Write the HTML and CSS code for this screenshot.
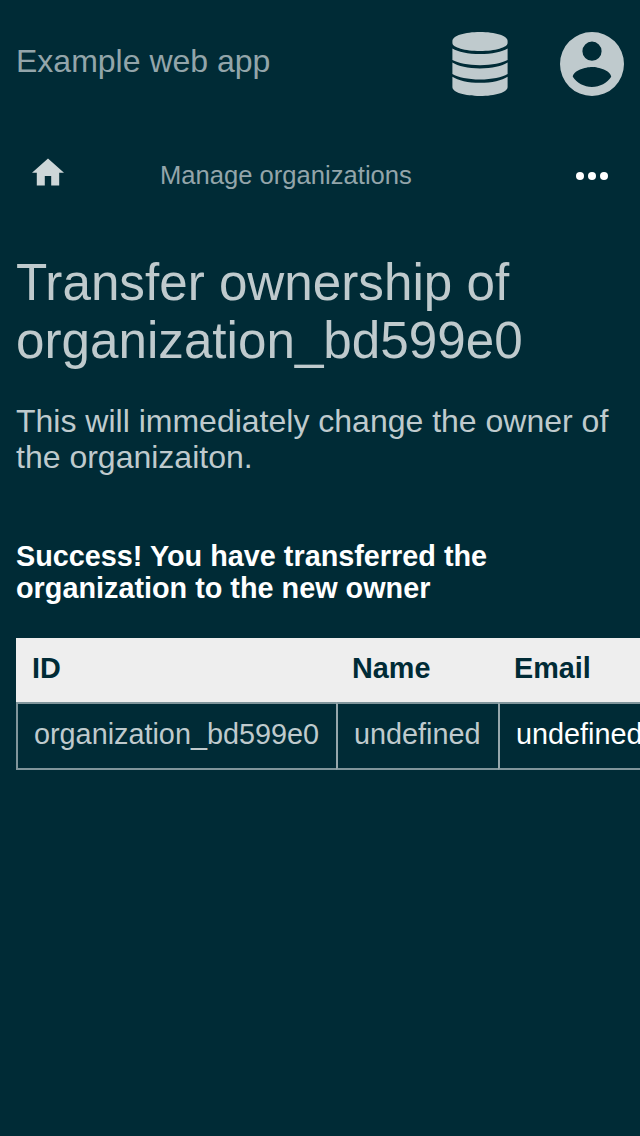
FILE: index.html
```
<!DOCTYPE html>
<html lang="en">
<head>
<meta charset="utf-8">
<title>Example web app</title>
<link rel="stylesheet" href="styles.css">
</head>
<body>
<header class="header">
  <span class="brand">Example web app</span>
  <div class="header-icons">
    <svg class="icon-data" viewBox="0 0 56 64" aria-label="Database">
      <path d="M.4 9C.4 3.500 13 0 28 0s27.600 3.500 27.600 9v2C55.600 15.500 43 19 28 19S.4 15.500 .4 11z"/>
      <path d="M.4 16.500C6 20 16 22 28 22s22-2 27.600-5.500V28C50 31 40 33.200 28 33.200S6 31 .4 28z"/>
      <path d="M.4 30.500C6 34 16 36.400 28 36.400s22-2.400 27.600-5.900V42C50 45.200 40 47.500 28 47.500S6 45.200 .4 42z"/>
      <path d="M.4 44.700C6 48.500 16 50.800 28 50.800s22-2.300 27.600-6.100V55C55.600 60.500 43 64 28 64S.4 60.500 .4 55z"/>
    </svg>
    <svg class="icon-account" viewBox="2 2 20 20" aria-label="Account">
      <path d="M12,19.2C9.5,19.2 7.29,17.92 6,16C6.03,14 10,12.9 12,12.9C14,12.9 17.97,14 18,16C16.71,17.92 14.5,19.2 12,19.2M12,5A3,3 0 0,1 15,8A3,3 0 0,1 12,11A3,3 0 0,1 9,8A3,3 0 0,1 12,5M12,2A10,10 0 0,0 2,12A10,10 0 0,0 12,22A10,10 0 0,0 22,12A10,10 0 0,0 12,2Z"/>
    </svg>
  </div>
</header>
<nav class="nav">
  <svg class="icon-home" viewBox="0 0 32 28" aria-label="Home"><path d="M16 .4L32 14.800H27.200V27.600H19.200V18H12.800V27.600H4.800V14.800H0z"/></svg>
  <span class="nav-link">Manage organizations</span>
  <svg class="icon-more" viewBox="0 0 32 8" aria-label="More"><circle cx="4" cy="4" r="4"/><circle cx="16" cy="4" r="4"/><circle cx="28" cy="4" r="4"/></svg>
</nav>
<main class="content">
  <h1 class="title">Transfer ownership of organization_bd599e0</h1>
  <p class="description">This will immediately change the owner of the organizaiton.</p>
  <p class="message">Success! You have transferred the organization to the new owner</p>
  <table class="data-table">
    <thead><tr><th class="col-id">ID</th><th class="col-name">Name</th><th class="col-email">Email</th></tr></thead>
    <tbody><tr><td>organization_bd599e0</td><td>undefined</td><td class="strong">undefined</td></tr></tbody>
  </table>
</main>
</body>
</html>
```
FILE: styles.css
```
* { box-sizing: border-box; }
html { background: #002b36; overflow: hidden; }
body {
  margin: 0;
  width: 640px;
  height: 1136px;
  overflow: hidden;
  background: #002b36;
  color: #bfcacd;
  font-family: "Liberation Sans", Arial, sans-serif;
}
svg { display: block; fill: currentColor; }
.header {
  display: flex;
  justify-content: space-between;
  height: 128px;
  padding: 32px 16px;
}
.brand { padding-top: 11px; font-size: 32px; line-height: 36px; color: #93a5aa; }
.header-icons { display: flex; gap: 52px; }
.icon-data { width: 56px; height: 64px; }
.icon-account { width: 64px; height: 64px; }
.nav { display: flex; align-items: center; height: 96px; padding: 0 32px; }
.icon-home { width: 32px; height: 28px; margin-bottom: 8px; color: #cdd6d8; }
.nav-link { margin: 0 0 2px 96px; font-size: 25.6px; line-height: 30px; color: #93a5aa; }
.icon-more { width: 32px; height: 8px; margin-left: auto; color: #fff; }
.content { padding: 30px 16px 0; }
.title { margin: 0; font-size: 51.2px; font-weight: 400; line-height: 58px; }
.description { margin: 33px 0 0; font-size: 32px; line-height: 36px; }
.message { margin: 65px 48px 0 0; font-size: 28.8px; font-weight: 700; line-height: 32px; color: #fff; }
.data-table {
  width: 722px;
  margin-top: 34px;
  border-spacing: 0;
  table-layout: fixed;
  font-size: 28.8px;
  line-height: 32px;
  text-align: left;
}
.col-id { width: 320px; }
.col-name { width: 162px; }
.col-email { width: 240px; }
.data-table th { height: 64px; padding: 14px 16px 18px; background: #eee; color: #002b36; }
.data-table td {
  height: 68px;
  padding: 14px 0 18px 16px;
  border: solid #80959b;
  border-width: 2px 0 2px 2px;
}
.data-table td + td { border-left-color: #96a7ac; }
.data-table .strong { color: #fff; }
```
